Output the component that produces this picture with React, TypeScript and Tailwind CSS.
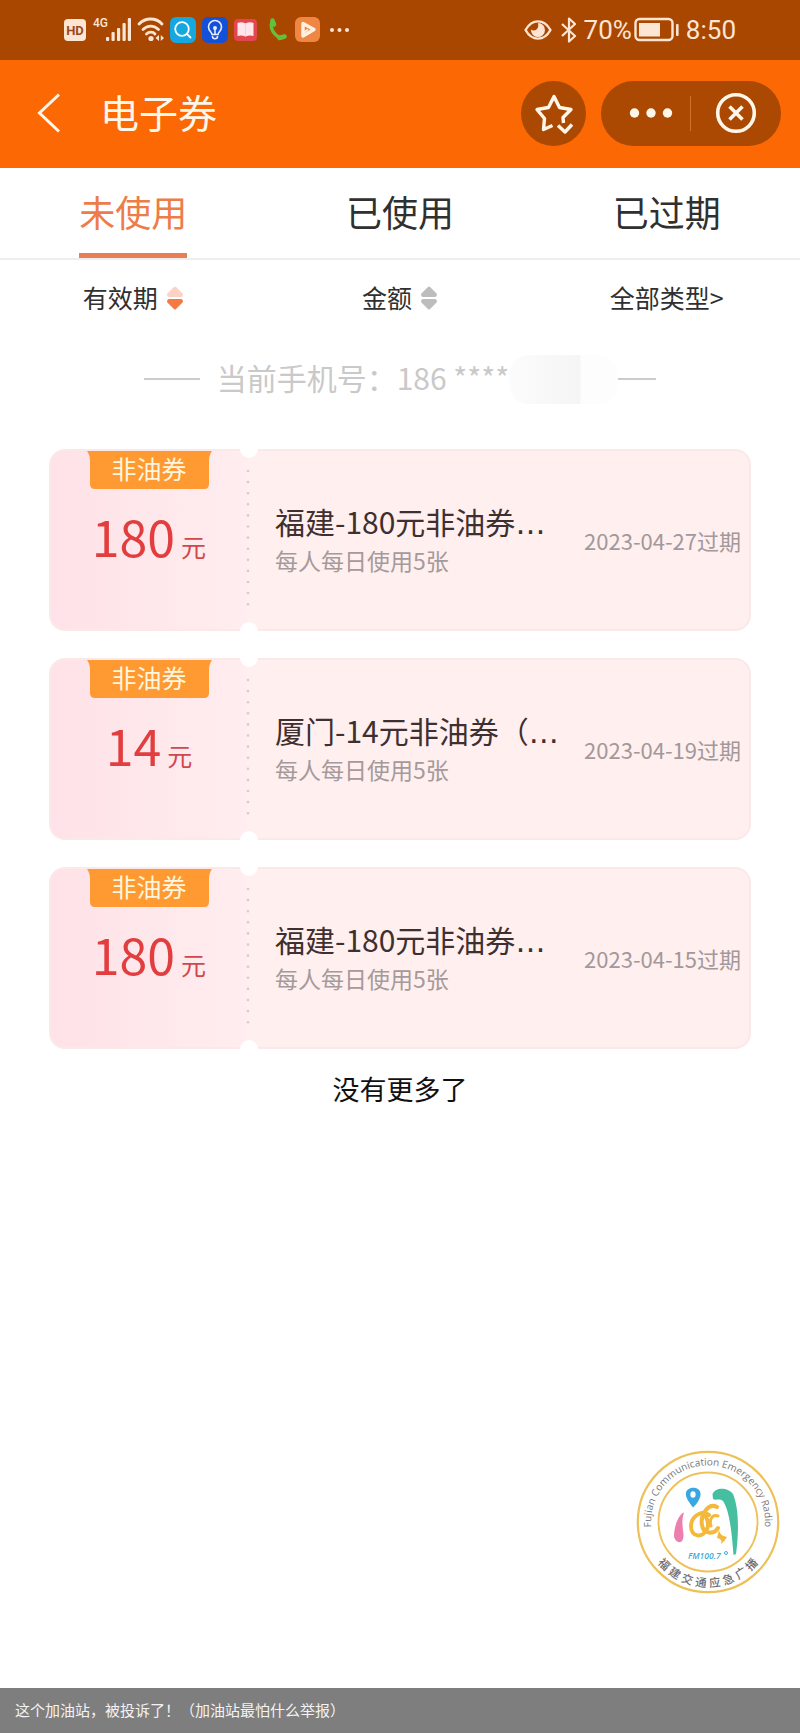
import React from "react";

type Coupon = {
  amount: number;
  title: string;
  limit: string;
  expires: string;
};

const coupons: Coupon[] = [
  { amount: 180, title: "福建-180元非油券", limit: "每人每日使用5张", expires: "2023-04-27过期" },
  { amount: 14, title: "厦门-14元非油券（", limit: "每人每日使用5张", expires: "2023-04-19过期" },
  { amount: 180, title: "福建-180元非油券", limit: "每人每日使用5张", expires: "2023-04-15过期" },
];

const tabs = ["未使用", "已使用", "已过期"];

const StatusBar = () => (
  <div className="flex h-[60px] items-center justify-between bg-[#a94700] px-[64px] font-['Roboto',sans-serif] text-[26px] text-[#fde5d3]">
    <div className="flex items-center gap-[6px]">
      <svg width="23" height="26" viewBox="0 0 23 26">
        <rect x="0" y="2" width="22" height="22" rx="4" fill="#fde5d3" />
        <text x="11" y="18" textAnchor="middle" fontSize="13" fontWeight="700" fill="#9a4a1a">
          HD
        </text>
      </svg>
      <svg width="38" height="26" viewBox="0 0 38 26" fill="#fde5d3">
        <text x="0" y="10" fontSize="12" fontWeight="500">
          4G
        </text>
        <rect x="13" y="20" width="3.200" height="4" rx="1" />
        <rect x="18.500" y="15" width="3.200" height="9" rx="1" />
        <rect x="24" y="11" width="3.200" height="13" rx="1" />
        <rect x="29.500" y="6" width="3.200" height="18" rx="1" />
        <rect x="34.800" y="1" width="3.200" height="23" rx="1" />
      </svg>
      <svg width="27" height="26" viewBox="0 0 27 26" fill="none" stroke="#fde5d3" strokeWidth="2.800" strokeLinecap="round">
        <path d="M2 7C8.500 0.300 19 0.300 25 7" />
        <path d="M6 12.500C10.500 8 17 8 21.500 12.500" />
        <path d="M9.500 17C12 14.600 16 14.600 18 17" />
        <circle cx="14" cy="21.500" r="2.600" fill="#fde5d3" stroke="none" />
        <path d="M22 18v6l-3.500-3zM23.800 18v6l3.200-3z" fill="#fde5d3" stroke="none" />
      </svg>
      <svg width="26" height="26" viewBox="0 0 26 26" fill="none" stroke="#fff" strokeWidth="1.800" strokeLinecap="round">
        <rect width="26" height="26" rx="6" fill="#14a7e0" stroke="none" />
        <circle cx="12" cy="12" r="6.800" />
        <path d="M17 17l3.500 3.500" />
      </svg>
      <svg width="26" height="26" viewBox="0 0 26 26" fill="none" stroke="#e4edff" strokeWidth="1.600" strokeLinecap="round">
        <rect width="26" height="26" rx="6" fill="#1550d8" stroke="none" />
        <path d="M10 17.500c0-2.500-3.500-3.500-3.500-7.500a6.500 6.500 0 0 1 13 0c0 4-3.500 5-3.500 7.500z" />
        <path d="M10.500 19.500c0 3 5 3 5 0" />
        <path d="M13 12v5" />
        <circle cx="13" cy="11" r="1.200" fill="#e4edff" />
      </svg>
      <svg width="24" height="26" viewBox="0 0 24 26">
        <rect x="0" y="2" width="23" height="22" rx="4" fill="#e2464e" />
        <path d="M3.500 6q4-1.600 8 0.500q4-2.100 8-0.500v13q-4-1-8 0.500q-4-1.500-8-0.500z" fill="#ffe6ea" />
        <path d="M11.500 6.500v13" stroke="#fbccd3" />
      </svg>
      <svg width="25" height="26" viewBox="0 0 25 26" fill="none" stroke="#62c03c" strokeLinecap="round">
        <path d="M8 5C5.500 11 10.500 20 18 20.500" strokeWidth="3.400" />
        <path d="M8.500 3.500l1.500 4M15.500 21l5-1.500" strokeWidth="4.600" />
      </svg>
      <svg width="26" height="26" viewBox="0 0 26 26">
        <rect width="25" height="25" rx="6" fill="#f08644" />
        <path d="M8 6.500l11 6-11 6.500z" fill="none" stroke="#fff1e2" strokeWidth="3.400" strokeLinejoin="round" />
        <path d="M8 16l5-3.500" stroke="#fff1e2" strokeWidth="2" />
      </svg>
      <svg width="26" height="26" viewBox="0 0 26 26" fill="#fde5d3">
        <circle cx="5" cy="13" r="2" />
        <circle cx="12.500" cy="13" r="2" />
        <circle cx="20" cy="13" r="2" />
      </svg>
    </div>
    <div className="flex items-center">
      <svg width="28" height="22" viewBox="0 0 28 22" fill="none" stroke="#fde5d3" strokeWidth="2.400">
        <path d="M1.500 11C8 -0.500 20 -0.500 26.500 11C20 22.500 8 22.500 1.500 11z" strokeLinejoin="round" />
        <path d="M14 4a7 7 0 1 1-7 6.500q3 2 5.500 0t1.500-6.500z" fill="#fde5d3" stroke="none" />
      </svg>
      <svg className="ml-2" width="18" height="26" viewBox="0 0 18 26" fill="none" stroke="#fde5d3" strokeWidth="2.200" strokeLinejoin="round">
        <path d="M2 7l13 12-6 5.500V1.500l6 5.500L2 19" />
      </svg>
      <span className="ml-[6px]">70%</span>
      <svg className="ml-[2px]" width="46" height="26" viewBox="0 0 46 26" fill="none">
        <rect x="1.500" y="2" width="37" height="21" rx="4" stroke="#fde5d3" strokeWidth="2.400" />
        <rect x="5" y="6" width="21" height="13.500" fill="#fde5d3" />
        <rect x="42" y="7" width="2.600" height="12" rx="1" fill="#fde5d3" />
      </svg>
      <span className="ml-[6px]">8:50</span>
    </div>
  </div>
);

const Header = () => (
  <header className="flex h-[108px] items-center bg-[#fb6804] pr-[19px] pb-[2px] pl-[36px] text-[#fff6ea]">
    <button aria-label="返回">
      <svg width="26" height="42" viewBox="0 0 26 42" fill="none" stroke="currentColor" strokeWidth="3">
        <path d="M23 2.500L3.500 21L23 39.500" />
      </svg>
    </button>
    <h1 className="ml-[38px] pb-1 text-[39px] leading-[48px]">电子券</h1>
    <button aria-label="收藏" className="ml-auto flex size-[65px] items-center justify-center rounded-full bg-[#ab4802]">
      <svg width="42" height="42" viewBox="0 0 42 42" fill="none" stroke="currentColor" strokeWidth="3.400" strokeLinejoin="round">
        <path d="M19.500 33.500L10.500 37.500L11.500 26.500L4 17.500L15.500 15.500L21 4.500L26.500 15.500L38 17.500L30 25.500L30.500 31" />
        <path d="M25 33.500l7 6.500 7-7.500" />
      </svg>
    </button>
    <div className="ml-[15px] flex h-[65px] w-[180px] items-center rounded-full bg-[#ab4802]">
      <button aria-label="更多" className="flex w-[89px] justify-center pl-[10px]">
        <svg width="44" height="12" viewBox="0 0 44 12" fill="currentColor">
          <circle cx="5.500" cy="6" r="4.700" />
          <circle cx="22" cy="6" r="4.700" />
          <circle cx="38.500" cy="6" r="4.700" />
        </svg>
      </button>
      <span className="h-[35px] w-px bg-[#cd752f]" />
      <button aria-label="关闭" className="flex flex-1 justify-center">
        <svg width="42" height="42" viewBox="0 0 42 42" fill="none" stroke="currentColor" strokeWidth="3.600">
          <circle cx="21" cy="21" r="18.300" />
          <path d="M14.500 14.500l13 13M27.500 14.500l-13 13" />
        </svg>
      </button>
    </div>
  </header>
);

const SortIcon = ({ up, down }: { up: string; down: string }) => (
  <svg width="18" height="26" viewBox="0 0 18 26" strokeWidth="3" strokeLinejoin="round">
    <path d="M9 3L15.500 9.500L15 10.500H3L2.500 9.500z" fill={up} stroke={up} />
    <path d="M9 23L15.500 16.500L15 15.500H3L2.500 16.500z" fill={down} stroke={down} />
  </svg>
);

const CouponCard = ({ coupon }: { coupon: Coupon }) => (
  <li className="relative flex h-[182px] rounded-[16px] border-2 border-[#fbe8e9] bg-[#ffefee]">
    <div className="flex w-[196px] flex-col items-center rounded-l-[14px] bg-linear-to-r from-[#fee2e7] to-[#ffedef]">
      <div className="relative h-[38px] w-[125px]">
        <svg className="absolute inset-0" width="125" height="38" viewBox="0 0 125 38">
          <path d="M0 0H125Q122 4 122 10V33Q122 38 117 38H8Q3 38 3 33V10Q3 4 0 0z" fill="#ff9932" />
        </svg>
        <span className="relative block text-center text-[25px] leading-[34px] text-[#fff6df]">非油券</span>
      </div>
      <p className="mt-[14px] flex items-baseline gap-[6px] text-[#e33e3f]">
        <span className="text-[50px] leading-[64px]">{coupon.amount}</span>
        <span className="text-[25px] text-[#d0484c]">元</span>
      </p>
    </div>
    <svg className="absolute top-[18px] left-[195px]" width="4" height="146" viewBox="0 0 4 146">
      <path d="M2 2V146" stroke="#d9c9cd" strokeWidth="2.600" strokeDasharray="0 11.100" strokeLinecap="round" />
    </svg>
    <span className="absolute -top-[11px] left-[189px] size-[18px] rounded-full bg-white" />
    <span className="absolute -bottom-[11px] left-[189px] size-[18px] rounded-full bg-white" />
    <div className="flex min-w-0 flex-1 items-center pr-2 pl-[28px]">
      <div className="min-w-0 flex-1">
        <h2 className="text-[30px] leading-[40px] whitespace-nowrap text-[#3e3030]">
          {coupon.title}
          <span className="font-['DejaVu_Sans',sans-serif] leading-none">…</span>
        </h2>
        <p className="text-[23px] leading-[38px] text-[#a59a9b]">{coupon.limit}</p>
      </div>
      <time className="text-[22px] whitespace-nowrap text-[#a3989a]">{coupon.expires}</time>
    </div>
  </li>
);

const RadioLogo = () => (
  <svg width="144" height="144" viewBox="-72 -72 144 144" className="block">
    <defs>
      <path id="ring" d="M-55.400 13.800A57 57 0 1 1 55.400 13.800" />
    </defs>
    <circle r="70.200" fill="#fff" stroke="#eec158" strokeWidth="2.200" />
    <circle r="49.500" fill="none" stroke="#eec158" strokeWidth="1.800" />
    <text fontSize="10" fill="#77777c" fontFamily="Open Sans, sans-serif">
      <textPath href="#ring" startOffset="50%" textAnchor="middle">
        Fujian Communication Emergency Radio
      </textPath>
    </text>
    {"福建交通应急广播".split("").map((char, i) => (
      <text key={char} y="65" textAnchor="middle" fontSize="11.500" fontWeight="500" fill="#6c6c72" transform={`rotate(${46 - i * 13.100})`}>
        {char}
      </text>
    ))}
    <path d="M-15 -14.500C-19 -20 -23 -25 -22 -29.500C-20.500 -36 -8.500 -36 -7.500 -29C-7 -24 -11 -18 -15 -14.500z" fill="#3aa7e0" />
    <ellipse cx="-15" cy="-27.500" rx="2.600" ry="3.300" fill="#fff" />
    <path d="M-24 -9.500C-29 -8 -34 4 -34 14C-33 21 -26 22 -25 17C-23 10 -28 3 -24 -9.500z" fill="#ec7fae" />
    <path d="M4.500 -28C8 -36 21 -34 25 -28C31 -14 31 10 28 32L25.500 33C24 14 22 -11 15 -21C11 -24 8 -21 5 -23z" fill="#45bfa0" />
    <g fill="none" stroke="#f4b83a" strokeWidth="4" strokeLinecap="round">
      <path d="M1 -7C-8 -13 -17 -4 -17 4C-17 16 -5 16 -1 7C2 1 -2 -7 -6 -9" />
      <path d="M9 -15C0 -20 -8 -6 -6 3C-5 12 6 13 10 6" />
      <path d="M10 -6C4 -8 1 -2 3 4" strokeWidth="3" />
    </g>
    <path d="M11 8C12 12 14 14 19 15Q17 19 13 22Q15 17 9 16z" fill="#f4b83a" />
    <text x="-20" y="37" fontSize="8.500" fontWeight="600" fontStyle="italic" fill="#3aaed8" fontFamily="Open Sans, sans-serif">
      FM100.7
    </text>
    <circle cx="18" cy="31" r="1.500" fill="none" stroke="#3aaed8" />
  </svg>
);

export default function App() {
  return (
    <div className="flex min-h-screen flex-col bg-white font-['Noto_Sans_CJK_SC',sans-serif] text-[#303030]">
      <StatusBar />
      <Header />
      <nav className="flex h-[92px] border-b-2 border-[#eeeeee]">
        {tabs.map((tab, i) => (
          <div key={tab} className="flex flex-1 justify-center">
            <button
              className={
                i === 0
                  ? "border-b-[5px] border-[#e97d55] text-[36px] text-[#ee7c48]"
                  : "border-b-[5px] border-transparent text-[36px]"
              }
            >
              {tab}
            </button>
          </div>
        ))}
      </nav>
      <div className="flex h-[76px] items-center text-[25px]">
        <button className="flex flex-1 items-center justify-center gap-2">
          有效期
          <SortIcon up="#fbd2c4" down="#f47a45" />
        </button>
        <button className="flex flex-1 items-center justify-center gap-2">
          金额
          <SortIcon up="#bdbdbd" down="#bdbdbd" />
        </button>
        <button className="flex-1">全部类型&gt;</button>
      </div>
      <main className="flex flex-1 flex-col">
        <div className="flex h-[86px] items-center justify-center text-[30px] text-[#c9c9c9]">
          <span className="mr-[17px] h-[2px] w-[56px] bg-[#cccccc]" />
          <p className="pb-1">当前手机号：186 ****</p>
          <span className="h-[49px] w-[109px] rounded-[20px] bg-linear-to-r from-[#fcfcfc] from-0% via-[#f5f5f5] via-65% to-[#fdfdfd] to-66%" />
          <span className="h-[2px] w-[38px] bg-[#cccccc]" />
        </div>
        <ul className="mt-[27px] flex flex-col gap-[27px] px-[49px]">
          {coupons.map((coupon) => (
            <CouponCard key={coupon.expires} coupon={coupon} />
          ))}
        </ul>
        <p className="mt-5 text-center text-[27px] leading-[40px] text-[#111111]">没有更多了</p>
        <div className="mt-auto mr-5 mb-[94px] self-end">
          <RadioLogo />
        </div>
      </main>
      <footer className="flex h-[45px] items-center bg-[#7e7e7e] px-[15px] text-[15px] text-[#f3f3f3]">
        这个加油站，被投诉了！（加油站最怕什么举报）
      </footer>
    </div>
  );
}
